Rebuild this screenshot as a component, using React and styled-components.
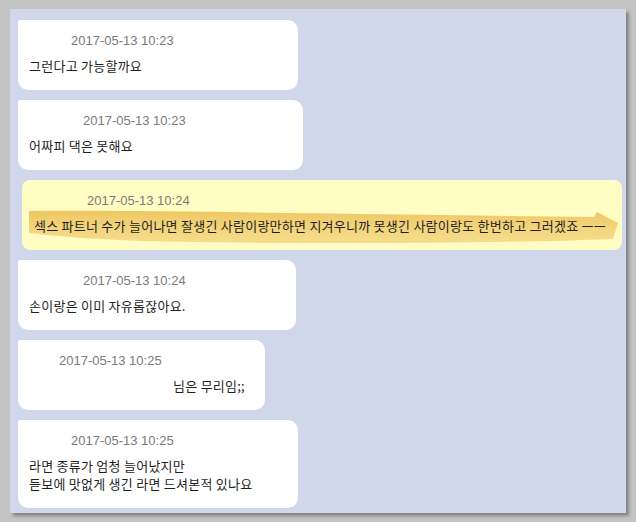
import React from "react";
import styled, { createGlobalStyle } from "styled-components";

const GlobalStyle = createGlobalStyle`
  html, body {
    margin: 0;
    padding: 0;
    background: #c3c3c3;
  }
  #root {
    width: 636px;
    height: 522px;
    overflow: hidden;
  }
`;

const messages = [
  { time: "2017-05-13 10:23", lines: ["그런다고 가능할까요"], width: 280, stamp: 42 },
  { time: "2017-05-13 10:23", lines: ["어짜피 댁은 못해요"], width: 285, stamp: 54 },
  {
    time: "2017-05-13 10:24",
    lines: ["섹스 파트너 수가 늘어나면 잘생긴 사람이랑만하면 지겨우니까 못생긴 사람이랑도 한번하고 그러겠죠 ㅡㅡ"],
    highlight: true,
    stamp: 53,
  },
  { time: "2017-05-13 10:24", lines: ["손이랑은 이미 자유롭잖아요."], width: 278, stamp: 54 },
  { time: "2017-05-13 10:25", lines: ["님은 무리임;;"], width: 247, stamp: 30, right: true },
  {
    time: "2017-05-13 10:25",
    lines: ["라면 종류가 엄청 늘어났지만", "듣보에 맛없게 생긴 라면 드셔본적 있나요"],
    width: 280,
    stamp: 42,
  },
];

const Panel = styled.div`
  margin: 9px 0 0 10px;
  width: 616px;
  height: 504px;
  box-sizing: border-box;
  padding: 11px 4px 0 8px;
  background: #d1d7ea;
  box-shadow: 3px 3px 3px rgba(60, 60, 60, 0.45);
  display: flex;
  flex-direction: column;
  align-items: flex-start;
  gap: 10px;
`;

const Bubble = styled.div`
  position: relative;
  box-sizing: border-box;
  width: ${(p) => (p.$highlight ? "auto" : `${p.$width}px`)};
  align-self: ${(p) => (p.$highlight ? "stretch" : "flex-start")};
  margin-left: ${(p) => (p.$highlight ? "4px" : "0")};
  padding: 13px ${(p) => (p.$right ? "20px" : "11px")} 15px ${(p) => (p.$highlight ? "12px" : "11px")};
  background: ${(p) => (p.$highlight ? "#fffdc4" : "#ffffff")};
  border-radius: ${(p) => (p.$highlight ? "8px" : "2px 10px 10px 10px")};
`;

const Stamp = styled.div`
  position: relative;
  z-index: 1;
  padding-left: ${(p) => p.$indent}px;
  margin-bottom: 8px;
  font-family: "Liberation Sans", Arial, sans-serif;
  font-size: 13px;
  line-height: 16px;
  color: #7b7b7b;
  white-space: nowrap;
`;

const Text = styled.div`
  position: relative;
  z-index: 1;
  font-family: "Noto Sans CJK KR", "Noto Sans", sans-serif;
  font-size: 13px;
  letter-spacing: 0.25px;
  line-height: 18px;
  color: #1f1f1f;
  white-space: nowrap;
  text-align: ${(p) => (p.$right ? "right" : "left")};
`;

const Marker = styled.svg`
  position: absolute;
  left: 0;
  top: 0;
  width: 100%;
  height: 100%;
  z-index: 0;
  pointer-events: none;
`;

// brush stroke with an arrow head running under the line
const MarkerStroke = () => (
  <Marker viewBox="0 0 600 70" preserveAspectRatio="none">
    <defs>
      <linearGradient id="brush" x1="0" y1="0" x2="0" y2="1">
        <stop offset="0" stopColor="#eec45e" />
        <stop offset="0.5" stopColor="#f2d277" />
        <stop offset="1" stopColor="#f5da88" />
      </linearGradient>
    </defs>
    <path
      d="M7,31 C120,30 330,34 572,37 L575,32 L596,43 L591,59 C470,64 250,64 120,61 C70,59 30,56 7,53 Z"
      fill="url(#brush)"
      opacity="0.95"
    />
  </Marker>
);

export default function App() {
  return (
    <>
      <GlobalStyle />
      <Panel>
        {messages.map((m, i) => (
          <Bubble key={i} $width={m.width} $highlight={m.highlight} $right={m.right}>
            {m.highlight && <MarkerStroke />}
            <Stamp $indent={m.stamp}>{m.time}</Stamp>
            {m.lines.map((line, j) => (
              <Text key={j} $right={m.right}>
                {line}
              </Text>
            ))}
          </Bubble>
        ))}
      </Panel>
    </>
  );
}
